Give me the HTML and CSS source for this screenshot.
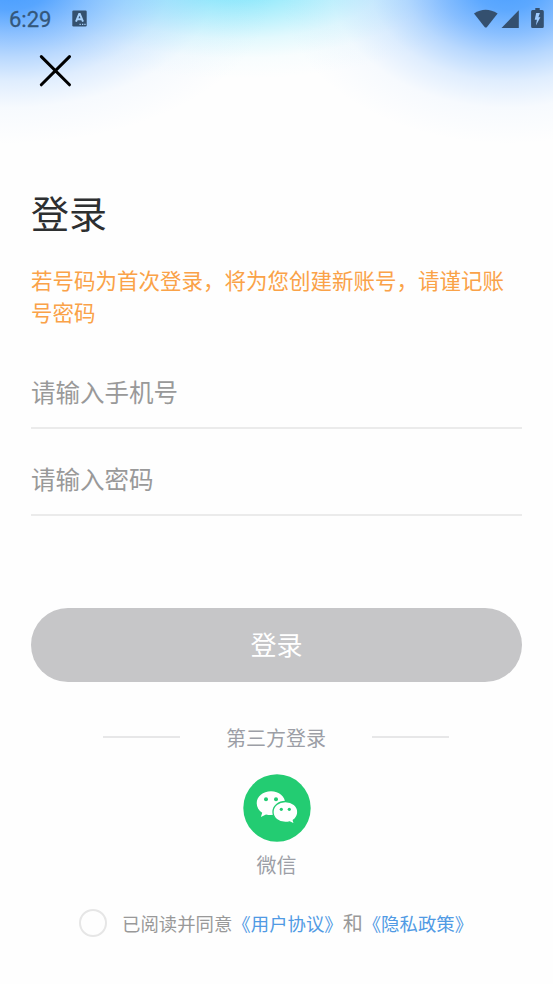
FILE: index.html
```html
<!DOCTYPE html>
<html lang="zh-CN">
<head>
<meta charset="utf-8">
<title>登录</title>
<link rel="stylesheet" href="styles.css">
</head>
<body>
<div class="screen">
  <header class="status">
    <span class="time">6:29</span>
    <svg class="app-icon" width="15" height="17" viewBox="0 0 15 17"><rect x=".3" y=".5" width="14.4" height="16" rx="1.2" fill="#34516f"/><path d="M4 11.7 7.2 3.9h.6l3.2 7.8M5.1 9.3h4.8" fill="none" stroke="#a6d0fb" stroke-width="2"/><path d="M7.5 14.3h1.3M10 14.3h1.3M12.3 14.3h1.3" stroke="#a6d0fb" stroke-width="1.2"/></svg>
    <svg class="signals" width="72" height="22" viewBox="0 0 72 22" fill="#34506f"><path d="M0 5.5Q11.5 -2 23.6 5.5L12.8 19.2Q11.8 20 10.8 19.2Z"/><path d="M44.8 2.2V20H27.5Z"/><path d="M61.3 0h4.4v2h2.6q1.5 0 1.5 1.5v15q0 1.5-1.5 1.5h-9.7q-1.5 0-1.5-1.5v-15Q57.1 2 58.6 2h2.7Z"/><path d="M62.2 5h3.7l-1.5 4.2h2l-4.5 8.3 1-5.8h-2.2Z" fill="#9dcbff"/></svg>
  </header>
  <button class="close" aria-label="关闭"><svg width="33" height="33" viewBox="0 0 33 33"><path d="M2.3 2.6 30.5 30.8M30.5 2.6 2.3 30.8" stroke="#000" stroke-width="3" stroke-linecap="round"/></svg></button>
  <main>
    <h1>登录</h1>
    <p class="notice">若号码为首次登录，将为您创建新账号，请谨记账号密码</p>
    <form>
      <input type="tel" placeholder="请输入手机号">
      <input type="password" placeholder="请输入密码">
      <button class="submit" type="button">登录</button>
    </form>
    <div class="divider"><span>第三方登录</span></div>
    <div class="wechat">
      <svg width="68" height="68" viewBox="0 0 68 68"><circle cx="34" cy="34" r="33.7" fill="#23cc72"/><path d="M28 17.3c-8 0-14.3 5.3-14.3 12 0 4 2.2 7.3 5.5 9.5l-1.3 4.3 5.1-2.7c1.6.4 3.2.7 5 .7 8 0 14.2-5.1 14.2-11.8S36 17.3 28 17.3Z" fill="#fff"/><path d="M42.4 27.5c-6.9 0-12.4 4.6-12.4 10.5s5.5 10.5 12.4 10.5c1.6 0 3-.2 4.3-.6l4.8 2.5-1.2-4.1c2.8-2 4.5-4.9 4.5-8.3 0-5.9-5.5-10.5-12.4-10.5Z" fill="#fff" stroke="#23cc72" stroke-width="1.3"/><g fill="#23cc72"><circle cx="23" cy="25.2" r="2"/><circle cx="33" cy="25.2" r="2"/><circle cx="38.3" cy="35.3" r="1.6"/><circle cx="46.3" cy="35.3" r="1.6"/></g></svg>
      <span>微信</span>
    </div>
    <div class="agreement"><i class="check"></i><span>已阅读并同意<a>《用户协议》</a><b>和</b><a>《隐私政策》</a></span></div>
  </main>
</div>
</body>
</html>
```
FILE: styles.css
```css
* { box-sizing: border-box; }
body { margin: 0; font-family: "Noto Sans CJK SC", sans-serif; background: #fefefe; }
.screen {
  height: 984px;
  overflow: hidden;
  background:
    radial-gradient(ellipse 265px 158px at 10px -14px, #459cff 0%, rgba(70,156,255,.9) 15%, rgba(80,160,255,.66) 30%, rgba(90,165,255,.42) 45%, rgba(100,170,255,.2) 60%, rgba(110,175,255,.05) 77%, rgba(120,180,255,0) 100%),
    radial-gradient(ellipse 230px 158px at 508px -14px, #4b9fff 0%, rgba(75,159,255,.9) 15%, rgba(80,160,255,.68) 30%, rgba(90,165,255,.42) 45%, rgba(100,170,255,.2) 60%, rgba(110,175,255,.05) 77%, rgba(120,180,255,0) 100%),
    radial-gradient(ellipse 255px 95px at 236px -16px, #88e8fb 0%, rgba(128,230,251,.82) 18%, rgba(128,230,251,.52) 38%, rgba(140,233,251,.24) 58%, rgba(150,235,251,.06) 78%, rgba(160,238,251,0) 100%),
    #fefefe;
}
.status { display: flex; align-items: center; height: 36px; padding: 0 10px 0 9px; }
.time { width: 63px; font: 400 22px/36px Roboto, sans-serif; color: #34577b; -webkit-text-stroke: .3px #34577b; padding-top: 3px; }
.app-icon { margin-top: 1px; }
.signals { margin: 1px -3px 0 auto; }
.close { display: block; width: 33px; height: 33px; margin: 18px 0 0 39px; padding: 0; border: 0; background: none; }
.close svg { display: block; }
main { padding: 97px 31px 0; }
h1 { margin: 0; font-size: 38px; line-height: 56px; font-weight: 400; color: #2d2f30; }
.notice { margin: 24px 0 0; font-size: 21.5px; line-height: 32px; color: #faa248; }
form { margin-top: 28px; }
input { display: block; width: 100%; height: 73px; margin-bottom: 14px; padding: 0; border: 0; border-bottom: 2px solid #ebebeb; background: none; font: 24.5px "Noto Sans CJK SC", sans-serif; outline: 0; }
input::placeholder { color: #999; opacity: 1; }
.submit { display: block; width: 100%; height: 74px; margin-top: 92px; padding: 0 0 2px; border: 0; border-radius: 37px; background: #c6c6c8; color: #fff; font: 26px/72px "Noto Sans CJK SC", sans-serif; }
.divider { display: flex; align-items: center; justify-content: center; gap: 46px; height: 30px; margin: 40px 1px 0 0; font-size: 20px; color: #9c9ea6; }
.divider::before, .divider::after { content: ""; width: 77px; height: 2px; background: #e7e7e8; }
.wechat { display: flex; flex-direction: column; align-items: center; margin: 22px 0 0; font-size: 20px; line-height: 30px; color: #9c9ea6; }
.wechat span { margin-top: 8px; }
.agreement { display: flex; align-items: center; height: 30px; margin: 28px 0 0 48px; font-size: 18.4px; line-height: 30px; color: #999; white-space: nowrap; }
.check { width: 28px; height: 28px; margin-right: 15px; border: 2px solid #e6e6e6; border-radius: 50%; }
.agreement a { color: #509ae4; }
.agreement b { font-size: 20px; font-weight: 400; }
```
